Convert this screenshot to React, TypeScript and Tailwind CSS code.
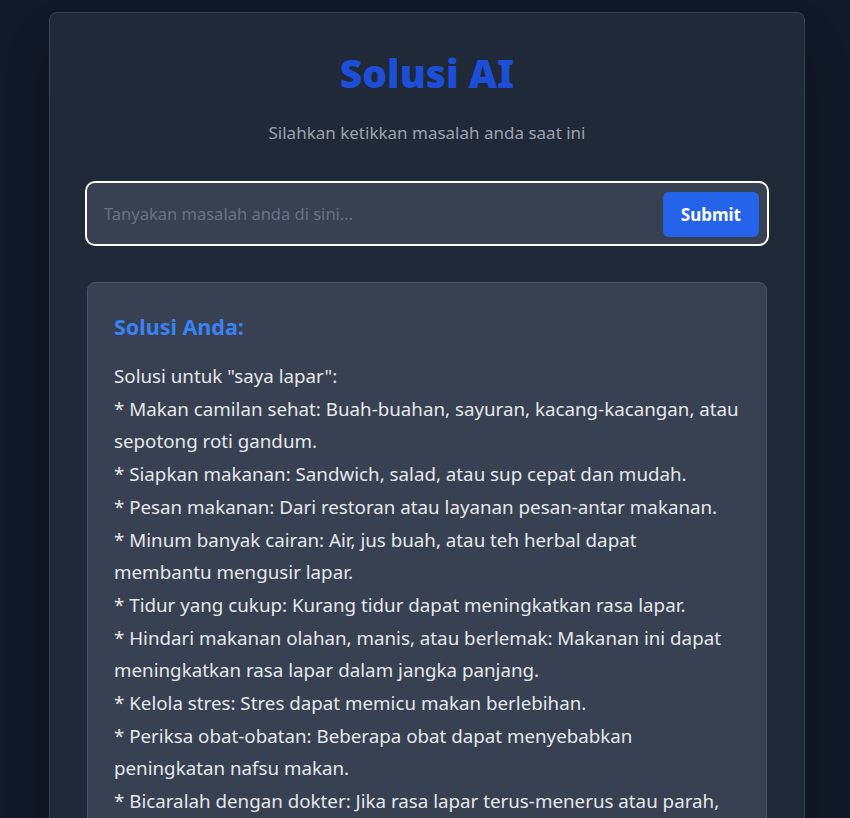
import { useState } from "react";

const lines = [
  'Solusi untuk "saya lapar":',
  "* Makan camilan sehat: Buah-buahan, sayuran, kacang-kacangan, atau",
  "sepotong roti gandum.",
  "* Siapkan makanan: Sandwich, salad, atau sup cepat dan mudah.",
  "* Pesan makanan: Dari restoran atau layanan pesan-antar makanan.",
  "* Minum banyak cairan: Air, jus buah, atau teh herbal dapat",
  "membantu mengusir lapar.",
  "* Tidur yang cukup: Kurang tidur dapat meningkatkan rasa lapar.",
  "* Hindari makanan olahan, manis, atau berlemak: Makanan ini dapat",
  "meningkatkan rasa lapar dalam jangka panjang.",
  "* Kelola stres: Stres dapat memicu makan berlebihan.",
  "* Periksa obat-obatan: Beberapa obat dapat menyebabkan",
  "peningkatan nafsu makan.",
  "* Bicaralah dengan dokter: Jika rasa lapar terus-menerus atau parah,",
  "konsultasikan dengan dokter untuk mengetahui penyebabnya.",
];

export default function App() {
  const [query, setQuery] = useState("");

  return (
    <div className="min-h-screen bg-[#111827] pt-3 pb-10 font-['Noto_Sans',sans-serif]">
      <div className="w-[756px] ml-[49px] bg-[#1f2937] border border-[#374151] rounded-lg shadow-2xl px-[37px] pt-9 pb-10">
        <h1 className="text-center text-[39px] leading-[48px] font-black text-[#1d4ed8]">Solusi AI</h1>
        <p className="text-center text-[17px] leading-6 text-[#9ca3af] mt-6">Silahkan ketikkan masalah anda saat ini</p>

        <form
          className="mt-[38px] flex items-center bg-[#374151] rounded-lg ring-2 ring-white px-2 pt-[9px] pb-[7px]"
          onSubmit={(e) => e.preventDefault()}
        >
          <input
            value={query}
            onChange={(e) => setQuery(e.target.value)}
            placeholder="Tanyakan masalah anda di sini..."
            className="flex-1 bg-transparent px-[9px] text-[16.5px] text-gray-100 placeholder:text-[#6b7280] outline-none"
          />
          <button type="submit" className="bg-[#2563eb] text-white text-[17px] font-bold rounded-md px-[18px] h-[45px]">
            Submit
          </button>
        </form>

        <div className="mt-[38px] bg-[#374151] border border-[#4b5563] rounded-lg px-[26px] pt-[30px] pb-6">
          <h2 className="text-[21.5px] leading-7 font-bold text-[#3b82f6]">Solusi Anda:</h2>
          <div className="mt-[19px] text-[18.75px] leading-[32.7px] text-[#e5e7eb]">
            {lines.map((l, i) => (
              <div key={i} className="whitespace-nowrap">{l}</div>
            ))}
          </div>
        </div>
      </div>
    </div>
  );
}
